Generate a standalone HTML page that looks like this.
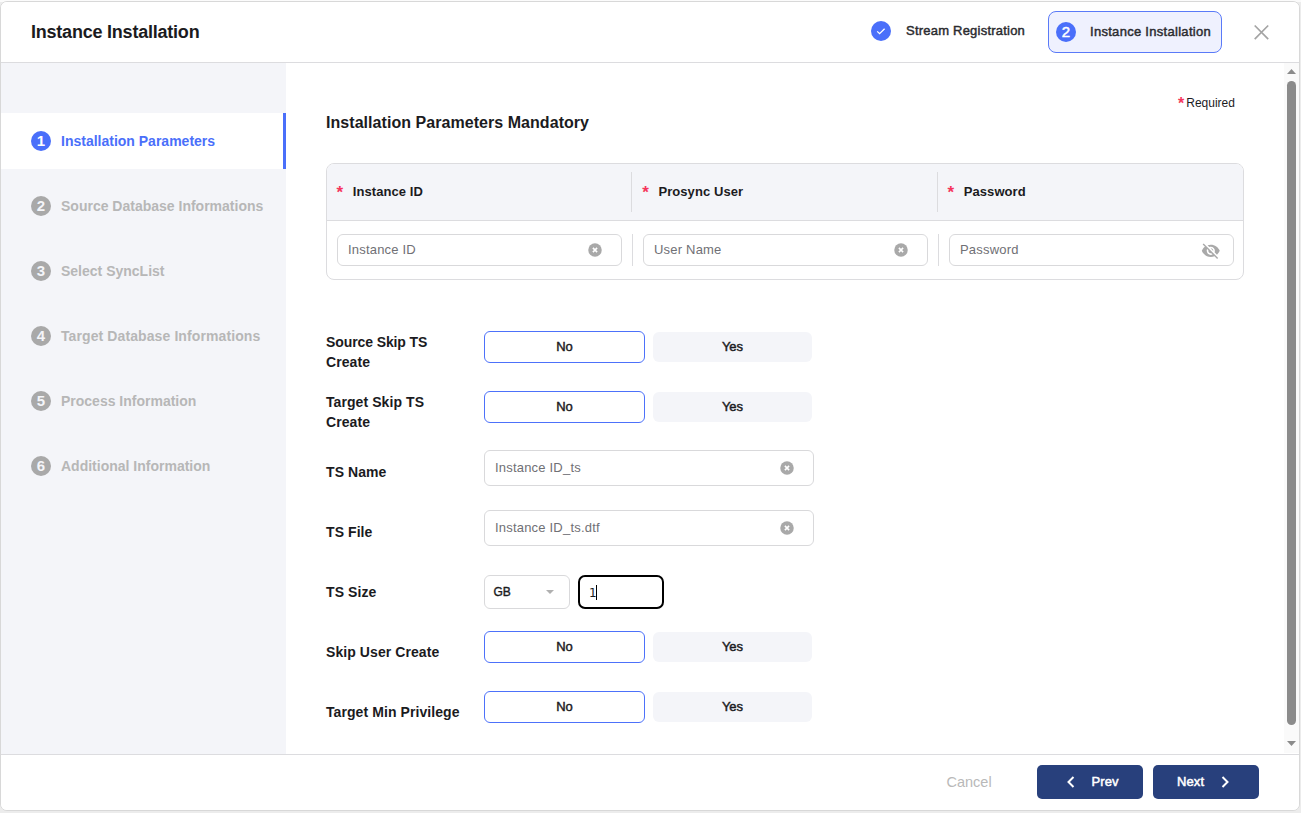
<!DOCTYPE html>
<html lang="en">
<head>
<meta charset="utf-8">
<title>Instance Installation</title>
<style>
*{box-sizing:border-box;margin:0;padding:0}
html,body{width:1301px;height:813px;overflow:hidden;background:#ececec;font-family:"Liberation Sans",Arial,sans-serif;color:#1c1c1f}
.abs{position:absolute}
.modal{position:absolute;left:0;top:1px;width:1300px;height:810px;background:#fff;border:1px solid #d8d8d8;border-radius:7px;overflow:hidden}
/* header */
.hdr{position:absolute;left:0;top:0;right:0;height:61px;border-bottom:1px solid #dcdcdf;background:#fff}
.hdr h1{position:absolute;left:30px;top:19px;font-size:18px;line-height:22px;font-weight:700;letter-spacing:-0.22px;color:#1b1b1e;white-space:nowrap}
.step{position:absolute;font-size:13px;font-weight:400;-webkit-text-stroke:0.45px #2b2b2f;letter-spacing:0.22px;color:#2b2b2f;white-space:nowrap}
.pill{position:absolute;left:1047px;top:9px;width:174px;height:42px;border:1px solid #5a7af8;border-radius:8px;background:#eff1fe}
.dot{position:absolute;width:20px;height:20px;border-radius:50%;background:#4a6ffa;color:#fff;text-align:center;font-weight:700}
.close{position:absolute;left:1252px;top:22px;width:17px;height:17px}
.body{position:absolute;left:0;top:-1px;width:1298px;height:755px}
/* sidebar */
.side{position:absolute;left:0;top:62px;width:285px;height:691px;background:#f4f5f9}
.nav{position:absolute;left:0;width:285px;height:56px}
.nav.on{background:#fff;border-right:3px solid #4a6ffa}
.nav .n{position:absolute;left:30px;top:18px;width:20px;height:20px;border-radius:50%;background:#a9a9a9;color:#f4f5f9;font-size:15px;line-height:20px;font-weight:700;text-align:center}
.nav.on .n{background:#4a6ffa;color:#fff}
.nav .t{position:absolute;left:60px;top:18px;font-size:14px;line-height:20px;font-weight:700;color:#b7b7b7;white-space:nowrap}
.nav.on .t{color:#4a6ffa}
/* main */
.main{position:absolute;left:285px;top:62px;width:998px;height:691px;background:#fff}
.req{position:absolute;left:1177px;top:94px;font-size:12px;line-height:16px;color:#1c1c1f;white-space:nowrap}
.req b{color:#f5365c;font-weight:700;font-size:16px;line-height:10px;margin-right:2px;position:relative;top:2px}
h2{position:absolute;left:325px;top:112px;letter-spacing:0.05px;font-size:16px;line-height:20px;font-weight:700;color:#1b1b1e;white-space:nowrap}
.tbl{position:absolute;left:325px;top:162px;width:918px;height:117px;border:1px solid #dcdcdf;border-radius:8px;overflow:hidden;background:#fff}
.tbl .th{position:absolute;left:0;top:0;right:0;height:57px;background:#f4f5f9;border-bottom:1px solid #dcdcdf}
.th .c{position:absolute;top:0;height:56px;font-size:13px;line-height:56px;letter-spacing:0.08px;font-weight:700;color:#1b1b1e;white-space:nowrap}
.th .c i{font-style:normal;color:#f5365c;margin-right:9px;font-size:17px;line-height:10px;position:relative;top:2px;left:-0.5px}
.sep{position:absolute;width:1px;background:#dcdcdf}
.inp{position:absolute;height:32px;border:1px solid #d9d9db;border-radius:6px;background:#fff;font-size:13px;letter-spacing:0.2px;color:#707075;white-space:nowrap}
.inp span{position:absolute;left:10px;top:0;line-height:30px}
.clr{position:absolute;width:14px;height:14px}
/* form */
.lbl{position:absolute;left:325px;font-size:14px;line-height:20px;font-weight:700;letter-spacing:0.08px;color:#1b1b1e;white-space:nowrap}
.no{position:absolute;left:483px;width:161px;height:32px;border:1px solid #4d71fa;border-radius:6px;background:#fff;font-size:13px;font-weight:400;-webkit-text-stroke:0.45px #1b1b1e;line-height:30px;text-align:center;color:#1b1b1e}
.yes{position:absolute;left:652px;width:159px;height:30px;border-radius:6px;background:#f4f5f9;font-size:13px;font-weight:400;-webkit-text-stroke:0.45px #1b1b1e;line-height:30px;text-align:center;color:#1b1b1e}
/* footer */
.ftr{position:absolute;left:0;top:752px;right:0;height:56px;border-top:1px solid #dcdcdf;background:#fff}
.btn{position:absolute;top:10px;width:106px;height:34px;border-radius:5px;background:#28407c;color:#fff;font-size:13px;font-weight:400;-webkit-text-stroke:0.5px #fff;letter-spacing:0.1px;line-height:33px;white-space:nowrap}
.cancel{position:absolute;left:945.5px;top:17px;font-size:14.5px;line-height:20px;color:#b9b9b9}
/* scrollbar */
.sb{position:absolute;left:1283px;top:62px;width:15px;height:690px;background:#fafafa}
.sb .thumb{position:absolute;left:3px;top:18px;width:9px;height:644px;border-radius:5px;background:#8b8b8b}
.sb .up{position:absolute;left:3px;top:6px;width:9px;height:5px}
.sb .dn{position:absolute;left:3px;top:678px;width:9px;height:5px}
</style>
</head>
<body>
<div class="abs" style="left:0;top:0;width:1301px;height:2px;background:#fbfbfb"></div>
<div class="modal">
  <div class="hdr">
    <h1>Instance Installation</h1>
    <div class="dot" style="left:870px;top:19px">
      <svg width="20" height="20" viewBox="0 0 20 20"><path d="M6.2 10.4l2.4 2.3 5-5" fill="none" stroke="#fff" stroke-width="1.3"/></svg>
    </div>
    <div class="step" style="left:905px;top:20px;line-height:18px">Stream Registration</div>
    <div class="pill">
      <div class="dot" style="left:7px;top:10px;font-size:15px;line-height:20px;font-weight:400;-webkit-text-stroke:0.5px #fff">2</div>
      <div class="step" style="left:41px;top:11px;line-height:18px;letter-spacing:0.29px">Instance Installation</div>
    </div>
    <svg class="close" viewBox="0 0 17 17"><path d="M1.7 1.5L15.2 15.2M15.2 1.5L1.7 15.2" stroke="#a4a4a4" stroke-width="1.7" fill="none"/></svg>
  </div>

  <div class="body">
  <div class="side">
    <div class="nav on" style="top:50px"><div class="n">1</div><div class="t">Installation Parameters</div></div>
    <div class="nav" style="top:115px"><div class="n">2</div><div class="t">Source Database Informations</div></div>
    <div class="nav" style="top:180px"><div class="n">3</div><div class="t">Select SyncList</div></div>
    <div class="nav" style="top:245px"><div class="n">4</div><div class="t" style="letter-spacing:0.1px">Target Database Informations</div></div>
    <div class="nav" style="top:310px"><div class="n">5</div><div class="t">Process Information</div></div>
    <div class="nav" style="top:375px"><div class="n">6</div><div class="t">Additional Information</div></div>
  </div>

  <div class="req"><b>*</b>Required</div>
  <h2>Installation Parameters Mandatory</h2>

  <div class="tbl">
    <div class="th">
      <div class="c" style="left:10px"><i>*</i>Instance ID</div>
      <div class="sep" style="left:304px;top:8px;height:40px"></div>
      <div class="c" style="left:315.7px"><i>*</i>Prosync User</div>
      <div class="sep" style="left:610px;top:8px;height:40px"></div>
      <div class="c" style="left:621px"><i>*</i>Password</div>
    </div>
    <div class="inp" style="left:10px;top:70px;width:285px"><span>Instance ID</span><svg class="clr" style="left:250px;top:8px" viewBox="0 0 14 14"><circle cx="7" cy="7" r="6.75" fill="#a9a9a9"/><path d="M4.9 4.9l4.2 4.2M9.1 4.9l-4.2 4.2" stroke="#fff" stroke-width="1.6" fill="none"/></svg></div>
    <div class="sep" style="left:305px;top:70px;height:32px"></div>
    <div class="inp" style="left:316px;top:70px;width:285px"><span>User Name</span><svg class="clr" style="left:250px;top:8px" viewBox="0 0 14 14"><circle cx="7" cy="7" r="6.75" fill="#a9a9a9"/><path d="M4.9 4.9l4.2 4.2M9.1 4.9l-4.2 4.2" stroke="#fff" stroke-width="1.6" fill="none"/></svg></div>
    <div class="sep" style="left:611px;top:70px;height:32px"></div>
    <div class="inp" style="left:622px;top:70px;width:285px"><span>Password</span><svg class="abs" style="left:250.8px;top:5.6px" width="19.6" height="19.6" viewBox="0 0 24 24"><path fill="#a9a9a9" d="M12 7c2.76 0 5 2.24 5 5 0 .65-.13 1.26-.36 1.83l2.92 2.92c1.51-1.26 2.7-2.89 3.43-4.75-1.73-4.39-6-7.5-11-7.5-1.4 0-2.74.25-3.98.7l2.16 2.16C10.74 7.13 11.35 7 12 7zM2 4.27l2.28 2.28.46.46C3.08 8.3 1.78 10.02 1 12c1.73 4.39 6 7.5 11 7.5 1.55 0 3.03-.3 4.38-.84l.42.42L19.73 22 21 20.73 3.27 3 2 4.27zM7.53 9.8l1.55 1.55c-.05.21-.08.43-.08.65 0 1.66 1.34 3 3 3 .22 0 .44-.03.65-.08l1.55 1.55c-.67.33-1.41.53-2.2.53-2.76 0-5-2.24-5-5 0-.79.2-1.53.53-2.2zm4.31-.78l3.15 3.15.02-.16c0-1.66-1.34-3-3-3l-.17.01z"/></svg></div>
  </div>

  <div class="lbl" style="top:331px"><span style="letter-spacing:-0.1px">Source Skip TS</span><br>Create</div>
  <div class="no" style="top:330px">No</div><div class="yes" style="top:331px">Yes</div>

  <div class="lbl" style="top:391px">Target Skip TS<br>Create</div>
  <div class="no" style="top:390px">No</div><div class="yes" style="top:391px">Yes</div>

  <div class="lbl" style="top:461px">TS Name</div>
  <div class="inp" style="left:483px;top:449px;width:330px;height:36px"><span style="line-height:34px">Instance ID_ts</span><svg class="clr" style="left:295px;top:10px" viewBox="0 0 14 14"><circle cx="7" cy="7" r="6.75" fill="#a9a9a9"/><path d="M4.9 4.9l4.2 4.2M9.1 4.9l-4.2 4.2" stroke="#fff" stroke-width="1.6" fill="none"/></svg></div>

  <div class="lbl" style="top:521px">TS File</div>
  <div class="inp" style="left:483px;top:509px;width:330px;height:36px"><span style="line-height:34px">Instance ID_ts.dtf</span><svg class="clr" style="left:295px;top:10px" viewBox="0 0 14 14"><circle cx="7" cy="7" r="6.75" fill="#a9a9a9"/><path d="M4.9 4.9l4.2 4.2M9.1 4.9l-4.2 4.2" stroke="#fff" stroke-width="1.6" fill="none"/></svg></div>

  <div class="lbl" style="top:581px">TS Size</div>
  <div class="inp" style="left:483px;top:574px;width:86px;height:34px;color:#1b1b1e"><span style="left:8.5px;line-height:32px;font-size:12px;letter-spacing:0;-webkit-text-stroke:0.4px #1b1b1e">GB</span>
    <div class="abs" style="left:61px;top:14px;width:0;height:0;border-left:4px solid transparent;border-right:4px solid transparent;border-top:4.5px solid #b0b0b0"></div>
  </div>
  <div class="inp" style="left:577px;top:574px;width:86px;height:34px;border:2px solid #000;border-radius:7px;color:#1b1b1e"><span style="left:9px;top:0.5px;line-height:30px;font-family:'DejaVu Sans',sans-serif;font-size:12px;letter-spacing:0">1</span>
    <div class="abs" style="left:16px;top:8px;width:1px;height:15px;background:#000"></div>
  </div>

  <div class="lbl" style="top:641px">Skip User Create</div>
  <div class="no" style="top:630px">No</div><div class="yes" style="top:631px">Yes</div>

  <div class="lbl" style="top:701px">Target Min Privilege</div>
  <div class="no" style="top:690px">No</div><div class="yes" style="top:691px">Yes</div>

  <div class="sb"><svg class="up" viewBox="0 0 9 5"><path d="M0 5L4.5 0 9 5z" fill="#8b8b8b"/></svg><div class="thumb"></div><svg class="dn" viewBox="0 0 9 5"><path d="M0 0L4.5 5 9 0z" fill="#8b8b8b"/></svg></div>

  </div>

  <div class="ftr">
    <div class="cancel">Cancel</div>
    <div class="btn" style="left:1036px"><span class="abs" style="left:54.5px">Prev</span>
      <svg class="abs" style="left:29px;top:10px" width="10" height="14" viewBox="0 0 10 14"><path d="M7.5 2L2.5 7l5 5" fill="none" stroke="#fff" stroke-width="2"/></svg>
    </div>
    <div class="btn" style="left:1152px"><span class="abs" style="left:24px">Next</span>
      <svg class="abs" style="left:67px;top:10px" width="10" height="14" viewBox="0 0 10 14"><path d="M2.5 2l5 5-5 5" fill="none" stroke="#fff" stroke-width="2"/></svg>
    </div>
  </div>
</div>
</body>
</html>
